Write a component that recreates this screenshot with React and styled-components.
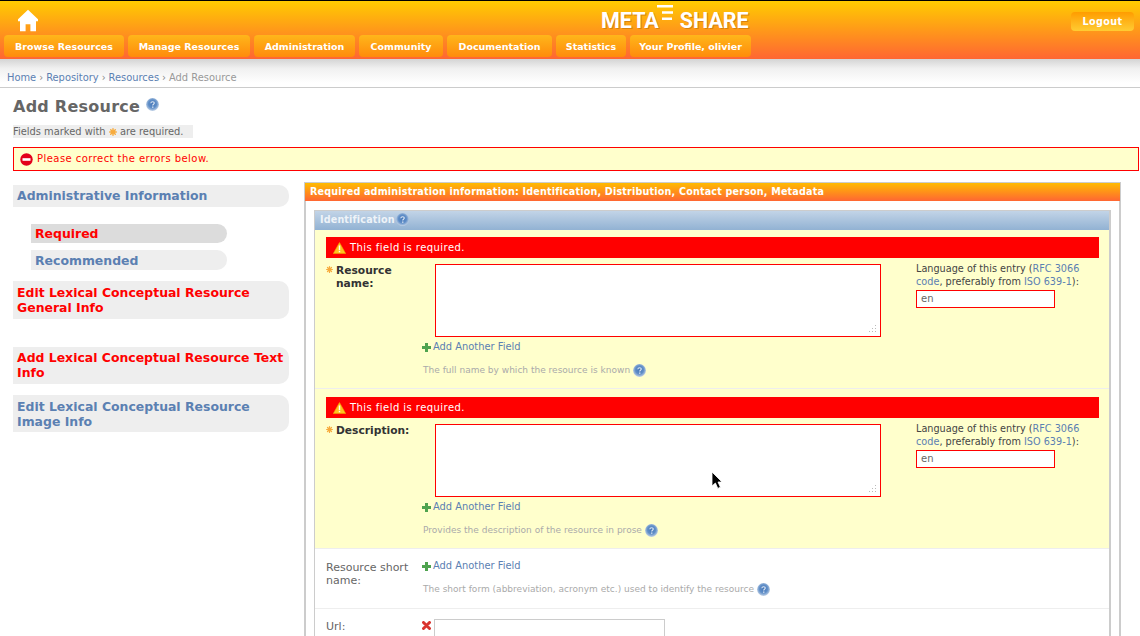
import React from "react";
import styled, { createGlobalStyle } from "styled-components";

const Global = createGlobalStyle`
  html, body { margin: 0; padding: 0; background: #fff; height: 636px; overflow: hidden; }
  body { font-family: "DejaVu Sans", Verdana, sans-serif; font-size: 10px; color: #333; }
  #root { position: relative; width: 1140px; height: 636px; overflow: hidden; }
  a { color: #5b80b2; text-decoration: none; }
`;

const Header = styled.header`
  height: 59px; box-sizing: border-box; border-top: 1px solid #000; display: flex; flex-direction: column; justify-content: flex-end;
  position: relative; padding: 0 4px 2px;
  background: linear-gradient(#ffcc00, #ff6633);
`;
const TopLine = styled.div`
  display: flex; justify-content: space-between; align-items: flex-start; height: 34px; flex: none;
`;
const HomeLink = styled.a`display: block; width: 22px; height: 23px; margin: 8px 0 0 13px;`;
const Logo = styled.div`
  position: absolute; left: 601px; top: 10px; display: flex; align-items: flex-start;
  color: #fff; font-family: Roboto, "Liberation Sans", sans-serif; font-weight: 700; font-size: 21.5px; line-height: 19px;
  text-shadow: 1px 1px 0 #d9820f;
`;
const LogoBars = styled.svg`flex: none; margin: -6px 7px 0 -2px;`;
const Logout = styled.a`
  position: absolute; top: 11px; right: 6px; width: 63px; height: 19px; border-radius: 4px; color: #fff; font-weight: 700;
  font-size: 9.6px; letter-spacing: .4px; display: flex; align-items: center; justify-content: center;
  background: linear-gradient(#ff9c00, #ffcc33);
`;
const Nav = styled.nav`display: flex; gap: 4px; height: 22px;`;
const NavItem = styled.a`
  width: ${p => p.$w}px; height: 22px; display: flex; align-items: center; justify-content: center; border-radius: 4px;
  color: #fff; font-weight: 700; font-size: 9.5px;
  background: linear-gradient(#ffb61a, #ff8b0b);
`;
const Shade = styled.div`
  height: 29px; box-sizing: border-box; border-bottom: 1px solid #ccc; display: flex; align-items: flex-end; padding: 0 7px 3px;
  background: linear-gradient(#d4d4d4 0, #efefef 9px, #f1f1f1 10px, #fff 24px);
  color: #999; font-size: 9.9px; line-height: 12px;
`;
const Sep = styled.span`margin: 0 3px; color: #888;`;
const Title = styled.h1`
  margin: 0; padding: 10px 0 0 13px; height: 27px; display: flex; align-items: flex-start; gap: 6px; box-sizing: border-box;
  font-size: 16px; line-height: 18px; font-weight: 700; color: #666; letter-spacing: .25px;
`;
const Note = styled.div`
  margin: 10px 0 0 13px; width: 180px; height: 13px; background: #eee; color: #666; font-size: 9.9px; line-height: 13px;
  display: flex; align-items: center; white-space: pre;
`;
const ErrorNote = styled.div`
  margin: 9px 1px 0 13px; height: 24px; box-sizing: border-box; border: 1px solid #f00; background: #ffc; color: #f00;
  display: flex; align-items: center; gap: 4px; padding: 0 0 2px 6px; font-size: 10px; letter-spacing: .45px;
`;
const Columns = styled.div`display: flex; margin-top: 11px; padding-left: 13px; align-items: flex-start;`;
const Side = styled.aside`width: 276px; margin: 3px 15px 0 0; flex: none; display: flex; flex-direction: column;`;
const SideItem = styled.a`
  display: block; background: #eee; border-radius: 0 10px 10px 0; padding: ${p => p.$pt}px 4px 0; color: ${p => p.$err ? "#f00" : "#5b80b2"};
  font-size: 12.45px; line-height: 15px; font-weight: 700; margin-top: ${p => p.$mt || 0}px; height: ${p => p.$h}px; box-sizing: border-box;
`;
const SubItem = styled.a`
  display: block; margin: ${p => p.$mt}px 0 0 18px; width: 196px; height: ${p => p.$h}px; line-height: ${p => p.$lh}px; box-sizing: border-box;
  padding-left: 4px; border-radius: 0 10px 10px 0; background: ${p => p.$active ? "#dcdcdc" : "#eee"};
  color: ${p => p.$err ? "#f00" : "#5b80b2"}; font-size: 12.45px; font-weight: 700;
`;
const Fieldset = styled.section`width: 817px; box-sizing: border-box; border: 1px solid #ccc; border-width: 1px 2px 0 2px; height: 500px;`;
const OrangeHead = styled.h2`
  margin: 0 -1px 0 -1px; height: 18px; padding-left: 5px; line-height: 18px; font-size: 9.6px; font-weight: 700; color: #fff; letter-spacing: .18px;
  background: linear-gradient(#ffbb00, #ff6633);
`;
const Inner = styled.div`margin: 9px 8px 0 8px; border: 1px solid #ccc; border-width: 1px 2px 0 1px;`;
const BlueHead = styled.h3`
  margin: 0; height: 19px; padding: 0 0 2px 5px; box-sizing: border-box; display: flex; align-items: center; gap: 1px; font-size: 9.6px; font-weight: 700; color: #eef3f8;
  letter-spacing: .15px; background: linear-gradient(#c2d4e7, #92b2d3);
`;
const Row = styled.div`
  background: ${p => p.$err ? "#ffc" : "#fff"}; border-bottom: 1px solid #eee; padding: ${p => p.$pt}px 11px 0;
  height: ${p => p.$h}px; box-sizing: border-box;
`;
const ErrBar = styled.div`
  height: 21px; background: #f00; color: #fff; font-size: 10px; letter-spacing: .45px; display: flex; align-items: center; gap: 4px; padding: 0 0 1px 7px;
  margin-bottom: 6px; width: 773px; box-sizing: border-box;
`;
const FieldGrid = styled.div`display: flex;`;
const LabelCol = styled.div`
  width: 96px; flex: none; display: flex; align-items: flex-start; font-size: ${p => p.$req ? 10.7 : 11}px; line-height: 13px; padding-top: ${p => p.$pt || 0}px; box-sizing: border-box;
  color: ${p => p.$req ? "#333" : "#666"}; font-weight: ${p => p.$req ? 700 : 400};
`;
const Star = styled.span`width: 10px; flex: none; margin-top: -1px;`;
const LabelText = styled.span`width: ${p => p.$w}px;`;
const FieldCol = styled.div`flex: none; width: 494px;`;
const AreaLine = styled.div`padding-left: 13px;`;
const Area = styled.div`
  width: 446px; height: 73px; box-sizing: border-box; border: 1px solid #f00; background: #fff; position: relative;
`;
const Grip = styled.svg`position: absolute; right: 3px; bottom: 2px;`;
const AddLink = styled.a`
  display: flex; align-items: center; gap: 2px; font-size: 9.9px; line-height: 12px; margin-top: ${p => p.$mt}px;
`;
const Help = styled.div`
  display: flex; align-items: center; gap: 3px; color: #aaa; font-size: 9px; line-height: 14px; margin-top: ${p => p.$mt}px; white-space: nowrap; padding-left: 1px;
  letter-spacing: .01px;
`;
const LangCol = styled.div`flex: none; width: 170px; color: #444; font-size: 9.7px; line-height: 12.5px; margin-top: -1px;`;
const LangInput = styled.div`
  width: 139px; height: 18px; margin-top: 2px; box-sizing: border-box; border: 1px solid #f00; background: #fff; color: #666; padding-left: 4px; line-height: 16px; font-size: 10px;
`;
const UrlLine = styled.div`display: flex; align-items: flex-start; gap: 3px; margin-left: 0;`;
const UrlInput = styled.div`width: 231px; height: 30px; box-sizing: border-box; border: 1px solid #ccc; background: #fff;`;
const Cursor = styled.svg`position: absolute; left: 711px; top: 471px;`;

const HelpIcon = ({ size = 13, id = "hg" }) => (
  <svg width={size} height={size} viewBox="0 0 13 13" style={{ flex: "none" }}>
    <defs><radialGradient id={id} cx=".5" cy=".45" r=".58"><stop offset="0" stopColor="#4476b8" /><stop offset=".55" stopColor="#618fc8" /><stop offset="1" stopColor="#cddaea" /></radialGradient></defs>
    <circle cx="6.5" cy="6.5" r="6.4" fill={`url(#${id})`} />
    <path d="M4.8 5.2c.1-1 .8-1.5 1.8-1.5s1.7.6 1.7 1.4c0 1.2-1.6 1.2-1.6 2.4" fill="none" stroke="#dfe8f3" strokeWidth="1.1" />
    <rect x="6.1" y="8.5" width="1.3" height="1.3" fill="#dfe8f3" />
  </svg>
);
const StarIcon = ({ size = 8 }) => (
  <svg width={size} height={size} viewBox="0 0 9 9" style={{ flex: "none" }}>
    <g stroke="#f7ab3c" strokeWidth="1.6" strokeLinecap="round"><path d="M4.5 .8v7.4M.8 4.5h7.4M1.9 1.9l5.2 5.2M7.1 1.9 1.9 7.1" /></g>
  </svg>
);
const PlusIcon = () => (
  <svg width="9" height="9" viewBox="0 0 9 9" style={{ flex: "none" }}>
    <path d="M3 0h3v3h3v3H6v3H3V6H0V3h3z" fill="#4fa34f" />
  </svg>
);
const CrossIcon = () => (
  <svg width="9" height="9" viewBox="0 0 9 9" style={{ flex: "none", marginTop: 2 }}>
    <path d="M1.5 1.5l6 6M7.5 1.5l-6 6" stroke="#d9342f" strokeWidth="3" strokeLinecap="round" />
  </svg>
);
const WarnIcon = () => (
  <svg width="13" height="12" viewBox="0 0 13 12" style={{ flex: "none", marginTop: 2 }}>
    <path d="M6.5.5 12.7 11.6H.3z" fill="#ffc31f" stroke="#f0a400" strokeWidth=".6" />
    <path d="M5.8 3.6h1.4v4.3H5.8zM5.8 8.8h1.4v1.4H5.8z" fill="#fff" />
  </svg>
);
const StopIcon = () => (
  <svg width="13" height="13" viewBox="0 0 13 13" style={{ flex: "none", marginTop: 2 }}>
    <circle cx="6.5" cy="6.5" r="6.2" fill="#e3001b" /><rect x="2.5" y="5.2" width="8" height="2.6" fill="#fff" />
  </svg>
);

const FieldRow = ({ id, h, top, err, label, labelWidth, req, pt, addMt, help, helpMt, lang }) => (
  <Row $err={err} $h={h} $pt={top}>
    {err && <ErrBar><WarnIcon />This field is required.</ErrBar>}
    <FieldGrid>
      <LabelCol $req={req} $pt={pt}>
        {req ? <Star><StarIcon size={7} /></Star> : null}
        <LabelText $w={labelWidth}>{label}</LabelText>
      </LabelCol>
      <FieldCol>
        {lang && <AreaLine><Area><Grip width="9" height="9" viewBox="0 0 9 9"><path d="M7 0h1v1H7zM4 3h1v1H4zM7 3h1v1H7zM1 6h1v1H1zM4 6h1v1H4zM7 6h1v1H7z" fill="#bbb" /></Grip></Area></AreaLine>}
        <AddLink href="#" $mt={addMt}><PlusIcon />Add Another Field</AddLink>
        <Help $mt={helpMt}>{help}<HelpIcon id={id} /></Help>
      </FieldCol>
      {lang && (
        <LangCol>
          Language of this entry (<a href="#">RFC 3066 code</a>, preferably from <a href="#">ISO 639-1</a>):
          <LangInput>en</LangInput>
        </LangCol>
      )}
    </FieldGrid>
  </Row>
);

const navItems = [
  ["Browse Resources", 120], ["Manage Resources", 122], ["Administration", 101], ["Community", 84],
  ["Documentation", 105], ["Statistics", 70], ["Your Profile, olivier", 121],
];

export default function App() {
  return (
    <>
      <Global />
      <Header>
        <TopLine>
          <HomeLink href="#" aria-label="Home">
            <svg width="22" height="23" viewBox="0 0 22 23"><path d="M11 .8 21 10.2v2H19v10h-5.6v-7h-4.8v7H3v-10H1v-2z" fill="#fff" /></svg>
          </HomeLink>
        </TopLine>
        <Logo>
          META
          <LogoBars width="16" height="17" viewBox="0 0 16 17"><path d="M0 0h16v2.4H0zM5 6.3h11v2.4H5zM5 12.6h10V15H5z" fill="#fff" /></LogoBars>
          SHARE
        </Logo>
        <Logout href="#">Logout</Logout>
        <Nav>
          {navItems.map(([t, w]) => (
            <NavItem href="#" key={t} $w={w}>{t}</NavItem>
          ))}
        </Nav>
      </Header>
      <Shade>
        <span><a href="#">Home</a><Sep>›</Sep><a href="#">Repository</a><Sep>›</Sep><a href="#">Resources</a><Sep>›</Sep>Add Resource</span>
      </Shade>
      <Title>Add Resource <HelpIcon id="h0" /></Title>
      <Note>Fields marked with <StarIcon /> are required.</Note>
      <ErrorNote><StopIcon />Please correct the errors below.</ErrorNote>
      <Columns>
        <Side>
          <SideItem href="#" $h={22} $pt={3}>Administrative Information</SideItem>
          <SubItem href="#" $mt={17} $h={19} $lh={19} $err $active>Required</SubItem>
          <SubItem href="#" $mt={7} $h={20} $lh={21}>Recommended</SubItem>
          <SideItem href="#" $err $mt={11} $h={38} $pt={4}>Edit Lexical Conceptual Resource General Info</SideItem>
          <SideItem href="#" $err $mt={28} $h={37} $pt={3}>Add Lexical Conceptual Resource Text Info</SideItem>
          <SideItem href="#" $mt={11} $h={37} $pt={4}>Edit Lexical Conceptual Resource Image Info</SideItem>
        </Side>
        <Fieldset>
          <OrangeHead>Required administration information: Identification, Distribution, Contact person, Metadata</OrangeHead>
          <Inner>
            <BlueHead>Identification<HelpIcon id="h1" /></BlueHead>
            <FieldRow id="h2" err req lang h={159} top={7} label="Resource name:" labelWidth={70} pt={0} addMt={4} helpMt={10} help="The full name by which the resource is known" />
            <FieldRow id="h3" err req lang h={160} top={8} label="Description:" labelWidth={80} pt={0} addMt={4} helpMt={10} help="Provides the description of the resource in prose" />
            <FieldRow id="h4" h={60} top={10} label="Resource short name:" labelWidth={88} pt={2} addMt={1} helpMt={10} help="The short form (abbreviation, acronym etc.) used to identify the resource" />
            <Row $h={60} $pt={10}>
              <FieldGrid>
                <LabelCol $pt={1}><LabelText $w={88}>Url:</LabelText></LabelCol>
                <UrlLine><CrossIcon /><UrlInput /></UrlLine>
              </FieldGrid>
            </Row>
          </Inner>
        </Fieldset>
      </Columns>
      <Cursor width="14" height="20" viewBox="0 0 14 20"><path d="M1 1v14l3.4-3 2.4 5.4 2.6-1.2-2.4-5.2H11z" fill="#000" stroke="#fff" strokeWidth=".8" /></Cursor>
    </>
  );
}
